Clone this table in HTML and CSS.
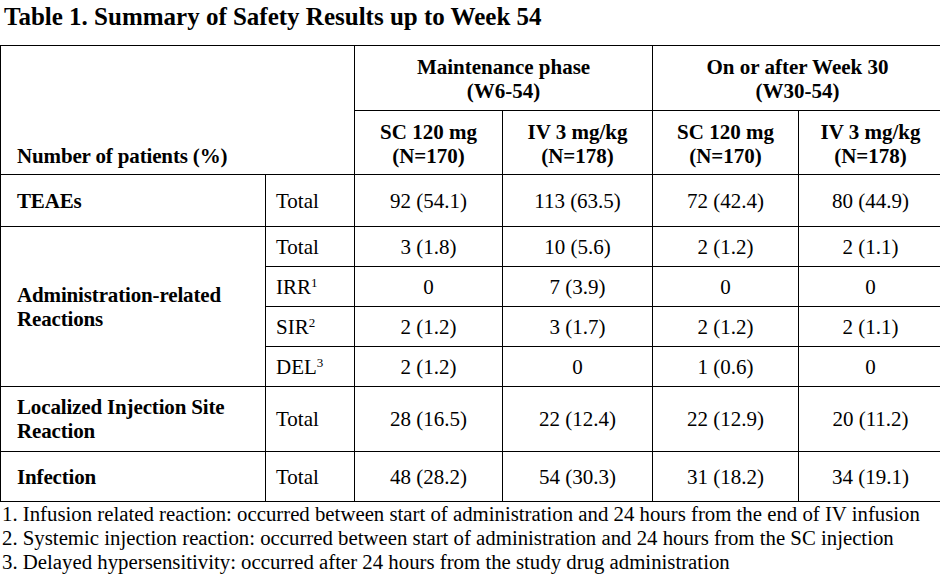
FILE: index.html
```html
<!DOCTYPE html>
<html>
<head>
<meta charset="utf-8">
<link rel="stylesheet" href="styles.css">
</head>
<body>
<div class="page">
  <h1 class="title">Table 1. Summary of Safety Results up to Week 54</h1>
  <div class="table-wrap">
    <table class="safety">
      <colgroup>
        <col class="c1"><col class="c2"><col class="c3"><col class="c4"><col class="c5"><col class="c6">
      </colgroup>
      <thead>
        <tr class="h1">
          <th class="lead" colspan="2" rowspan="2">Number of patients (%)</th>
          <th colspan="2">Maintenance phase<br>(W6-54)</th>
          <th colspan="2">On or after Week 30<br>(W30-54)</th>
        </tr>
        <tr class="h2">
          <th>SC 120 mg<br>(N=170)</th>
          <th>IV 3 mg/kg<br>(N=178)</th>
          <th>SC 120 mg<br>(N=170)</th>
          <th>IV 3 mg/kg<br>(N=178)</th>
        </tr>
      </thead>
      <tbody>
        <tr class="r-teae">
          <th class="cat">TEAEs</th>
          <td class="sub">Total</td>
          <td>92 (54.1)</td><td>113 (63.5)</td><td>72 (42.4)</td><td>80 (44.9)</td>
        </tr>
        <tr class="r-sm">
          <th class="cat" rowspan="4">Administration-related<br>Reactions</th>
          <td class="sub">Total</td>
          <td>3 (1.8)</td><td>10 (5.6)</td><td>2 (1.2)</td><td>2 (1.1)</td>
        </tr>
        <tr class="r-sm">
          <td class="sub">IRR<sup>1</sup></td>
          <td>0</td><td>7 (3.9)</td><td>0</td><td>0</td>
        </tr>
        <tr class="r-sm">
          <td class="sub">SIR<sup>2</sup></td>
          <td>2 (1.2)</td><td>3 (1.7)</td><td>2 (1.2)</td><td>2 (1.1)</td>
        </tr>
        <tr class="r-sm">
          <td class="sub">DEL<sup>3</sup></td>
          <td>2 (1.2)</td><td>0</td><td>1 (0.6)</td><td>0</td>
        </tr>
        <tr class="r-lis">
          <th class="cat">Localized Injection Site<br>Reaction</th>
          <td class="sub">Total</td>
          <td>28 (16.5)</td><td>22 (12.4)</td><td>22 (12.9)</td><td>20 (11.2)</td>
        </tr>
        <tr class="r-inf">
          <th class="cat">Infection</th>
          <td class="sub">Total</td>
          <td>48 (28.2)</td><td>54 (30.3)</td><td>31 (18.2)</td><td>34 (19.1)</td>
        </tr>
      </tbody>
    </table>
  </div>
  <div class="notes">
    <p>1. Infusion related reaction: occurred between start of administration and 24 hours from the end of IV infusion</p>
    <p>2. Systemic injection reaction: occurred between start of administration and 24 hours from the SC injection</p>
    <p>3. Delayed hypersensitivity: occurred after 24 hours from the study drug administration</p>
  </div>
</div>
</body>
</html>
```

FILE: styles.css
```css
html, body {
  margin: 0;
  padding: 0;
  background: #fff;
}
body {
  font-family: "Liberation Serif", "Times New Roman", serif;
  color: #000;
}
.page {
  width: 940px;
  height: 575px;
  overflow: hidden;
}
.title {
  margin: 0;
  padding: 3px 0 0 4px;
  height: 45px;
  box-sizing: border-box;
  font-size: 25px;
  line-height: 28px;
  font-weight: bold;
}
.table-wrap {
  width: 940px;
  overflow: hidden;
}
.safety {
  border-collapse: collapse;
  table-layout: fixed;
  width: 942px;
  font-size: 21px;
  line-height: 24px;
}
.c1 { width: 265px; }
.c2 { width: 89px; }
.c3 { width: 148px; }
.c4 { width: 150px; }
.c5 { width: 146px; }
.c6 { width: 144px; }
.safety th,
.safety td {
  border: 1px solid #000;
  padding: 0;
  text-align: center;
  vertical-align: middle;
}
.safety th {
  font-weight: bold;
}
.safety .lead {
  text-align: left;
  vertical-align: bottom;
  padding: 0 0 6px 16px;
}
.safety .lead,
.safety .cat {
  letter-spacing: -0.15px;
}
.h1 { height: 65px; }
.h2 { height: 64px; }
.h1 th, .h2 th { padding-top: 2px; }
.safety .cat {
  text-align: left;
  padding-left: 16px;
}
.safety .sub {
  text-align: left;
  padding-left: 10px;
}
.r-teae { height: 52px; }
.r-sm { height: 40px; }
.r-lis { height: 65px; }
.r-inf { height: 50px; }
sup {
  font-size: 13px;
  line-height: 0;
  vertical-align: 7px;
}
.notes {
  padding-left: 2px;
  font-size: 20.8px;
  line-height: 24px;
}
.notes p {
  margin: 0;
}
```
